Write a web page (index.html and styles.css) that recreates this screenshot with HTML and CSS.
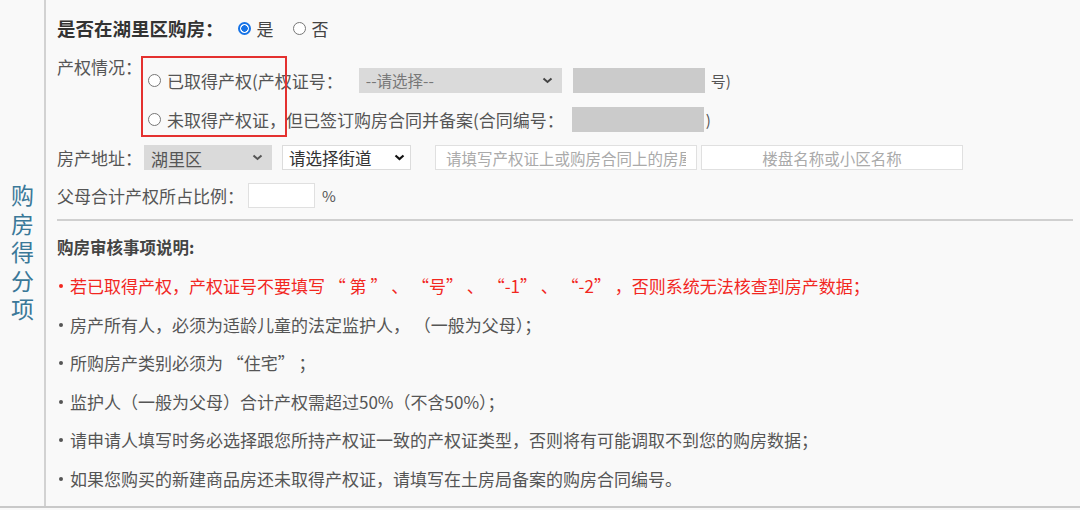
FILE: index.html
```html
<!DOCTYPE html>
<html lang="zh-CN">
<head>
<meta charset="utf-8">
<title>购房得分项</title>
<link rel="stylesheet" href="styles.css">
</head>
<body>
<div class="panel">
  <div class="side"><span class="side-text">购房得分项</span></div>
  <div class="main">
    <div class="row row1">
      <span class="q-label">是否在湖里区购房：</span>
      <label class="opt"><input type="radio" name="buy" class="radio" checked><span>是</span></label>
      <label class="opt"><input type="radio" name="buy" class="radio"><span>否</span></label>
    </div>

    <div class="prop">
      <span class="label prop-label">产权情况：</span>
      <div class="prop-opts">
        <div class="prop-line">
          <input type="radio" name="prop" class="radio">
          <span class="txt">已取得产权(产权证号：</span>
          <div class="sel-wrap sel-cert">
            <select class="sel sel-gray"><option>--请选择--</option></select>
            <svg class="chev" width="11" height="7" viewBox="0 0 11 7"><polyline points="1.5,1.5 5.5,5 9.5,1.5" fill="none" stroke="#444" stroke-width="2"/></svg>
          </div>
          <input type="text" class="gray-input" disabled>
          <span class="txt suffix">号)</span>
        </div>
        <div class="prop-line">
          <input type="radio" name="prop" class="radio">
          <span class="txt">未取得产权证，但已签订购房合同并备案(合同编号：</span>
          <input type="text" class="gray-input gray-input2" disabled>
          <span class="txt suffix2">)</span>
        </div>
      </div>
      <div class="mark"></div>
    </div>

    <div class="row row-addr">
      <span class="label addr-label">房产地址：</span>
      <div class="sel-wrap sel-district">
        <select class="sel sel-gray sel-dark"><option>湖里区</option></select>
        <svg class="chev" width="11" height="7" viewBox="0 0 11 7"><polyline points="1.5,1.5 5.5,5 9.5,1.5" fill="none" stroke="#555" stroke-width="2"/></svg>
      </div>
      <div class="sel-wrap sel-street">
        <select class="sel sel-white"><option>请选择街道</option></select>
        <svg class="chev" width="11" height="7" viewBox="0 0 11 7"><polyline points="1.5,1.5 5.5,5 9.5,1.5" fill="none" stroke="#111" stroke-width="2.2"/></svg>
      </div>
      <input type="text" class="txt-input addr-input" placeholder="请填写产权证上或购房合同上的房屋地址">
      <input type="text" class="txt-input estate-input" placeholder="楼盘名称或小区名称">
    </div>

    <div class="row row-ratio">
      <span class="label">父母合计产权所占比例：</span>
      <input type="text" class="txt-input ratio-input">
      <span class="pct">%</span>
    </div>

    <div class="sep"></div>

    <div class="notes-title">购房审核事项说明:</div>
    <ul class="notes">
      <li class="warn">若已取得产权，产权证号不要填写 “ 第 ” 、 “号” 、 “-1” 、 “-2” ，否则系统无法核查到房产数据；</li>
      <li>房产所有人，必须为适龄儿童的法定监护人， （一般为父母）；</li>
      <li>所购房产类别必须为 “住宅” ；</li>
      <li>监护人（一般为父母）合计产权需超过50%（不含50%）；</li>
      <li>请申请人填写时务必选择跟您所持产权证一致的产权证类型，否则将有可能调取不到您的购房数据；</li>
      <li>如果您购买的新建商品房还未取得产权证，请填写在土房局备案的购房合同编号。</li>
    </ul>
  </div>
</div>
</body>
</html>
```

FILE: styles.css
```css
* { box-sizing: border-box; }
html, body {
  margin: 0;
  padding: 0;
  background: #f9f9f9;
}
body {
  width: 1080px;
  height: 510px;
  overflow: hidden;
  font-family: "Noto Sans CJK SC", "Microsoft YaHei", sans-serif;
  color: #555;
  font-size: 16px;
}
.panel {
  display: flex;
  height: 508px;
  border-bottom: 2px solid #c9c9c9;
}
.side {
  width: 46px;
  flex: none;
  border-right: 2px solid #d2d2d2;
  display: flex;
  align-items: center;
  justify-content: center;
  padding-bottom: 2px;
}
.side-text {
  writing-mode: vertical-rl;
  text-orientation: upright;
  font-size: 23px;
  letter-spacing: 5.5px;
  color: #3a7898;
  line-height: 1;
  padding-top: 6px;
}
.main {
  flex: 1;
  padding: 0 7px 0 11px;
}
.row {
  display: flex;
  align-items: center;
}
.row1 {
  height: 36px;
  margin-top: 10px;
}
.q-label {
  font-weight: 700;
  font-size: 18.5px;
  color: #333;
  margin-right: 14px;
}
.opt {
  display: flex;
  align-items: center;
  font-size: 17px;
  color: #444;
  margin-right: 19px;
}
.opt .radio { margin-right: 6px; }
.radio {
  appearance: none;
  -webkit-appearance: none;
  width: 13px;
  height: 13px;
  margin: 0;
  border: 1px solid #777;
  border-radius: 50%;
  background: #fff;
  flex: none;
}
.radio:checked {
  border: 2px solid #1673e6;
  background: radial-gradient(circle, #1673e6 0 3px, #fff 3.5px);
}
.label {
  font-size: 17px;
  color: #555;
}
.prop {
  position: relative;
  display: flex;
  margin-top: 8px;
}
.prop-label {
  width: 91px;
  line-height: 26px;
  flex: none;
}
.prop-opts {
  padding-top: 13px;
  display: flex;
  flex-direction: column;
  gap: 13px;
}
.prop-line {
  display: flex;
  align-items: center;
  height: 26px;
}
.prop-line .radio { margin-right: 6px; }
.txt {
  font-size: 17px;
  color: #555;
  white-space: nowrap;
}
.sel-wrap {
  position: relative;
  flex: none;
}
.sel {
  appearance: none;
  -webkit-appearance: none;
  font-family: inherit;
  height: 25px;
  margin: 0;
  padding: 0 0 0 6px;
  border-radius: 0;
  outline: none;
  display: block;
}
.chev {
  position: absolute;
  right: 9px;
  top: 9px;
  pointer-events: none;
}
.sel-cert { margin-left: 16px; }
.sel-cert .sel { width: 203px; }
.sel-gray {
  background: #dadada;
  border: 1px solid #dadada;
  color: #777;
  font-size: 15.5px;
}
.sel-dark { color: #555; font-size: 17px; }
.gray-input {
  width: 132px;
  height: 25px;
  margin: 0 0 0 11px;
  border: none;
  background: #cbcbcb;
  flex: none;
}
.suffix { margin-left: 6px; font-size: 15px; }
.gray-input2 { margin-left: 8px; }
.suffix2 { margin-left: 2px; font-size: 15px; }
.mark {
  position: absolute;
  left: 84px;
  top: 2px;
  width: 146px;
  height: 81px;
  border: 2px solid #e4312f;
}
.row-addr {
  height: 25px;
  margin-top: 13px;
}
.addr-label { width: 87px; flex: none; }
.sel-district .sel { width: 128px; }
.sel-street { margin-left: 10px; }
.sel-white {
  width: 129px;
  background: #fff;
  border: 1px solid #dcdcdc;
  color: #333;
  font-size: 16.5px;
}
.sel-street .chev { right: 6px; }
.txt-input {
  height: 25px;
  margin: 0;
  border: 1px solid #e0e0e0;
  background: #fff;
  font-family: inherit;
  font-size: 15.5px;
  outline: none;
  flex: none;
}
.txt-input::placeholder { color: #aaa; }
.addr-input {
  width: 262px;
  margin-left: 24px;
  padding: 0 10px;
}
.estate-input {
  width: 262px;
  margin-left: 4px;
  text-align: center;
}
.row-ratio {
  height: 25px;
  margin-top: 13px;
}
.ratio-input {
  width: 67px;
  margin-left: 4px;
}
.pct {
  margin-left: 7px;
  font-size: 15px;
  color: #555;
}
.sep {
  height: 2px;
  background: #d0d0d0;
  margin-top: 11px;
}
.notes-title {
  margin-top: 14px;
  line-height: 24px;
  font-weight: 700;
  font-size: 16.5px;
  color: #444;
}
.notes {
  list-style: none;
  margin: 8px 0 0;
  padding: 0;
}
.notes li {
  line-height: 38.5px;
  height: 38.5px;
  font-size: 17px;
  color: #555;
  white-space: nowrap;
  display: flex;
  align-items: center;
}
.notes li::before {
  content: "";
  width: 4px;
  height: 4px;
  border-radius: 50%;
  background: #555;
  margin: 0 7px 0 2px;
  flex: none;
}
.notes li.warn { color: #f2271f; }
.notes li.warn::before { background: #f2271f; }
```
